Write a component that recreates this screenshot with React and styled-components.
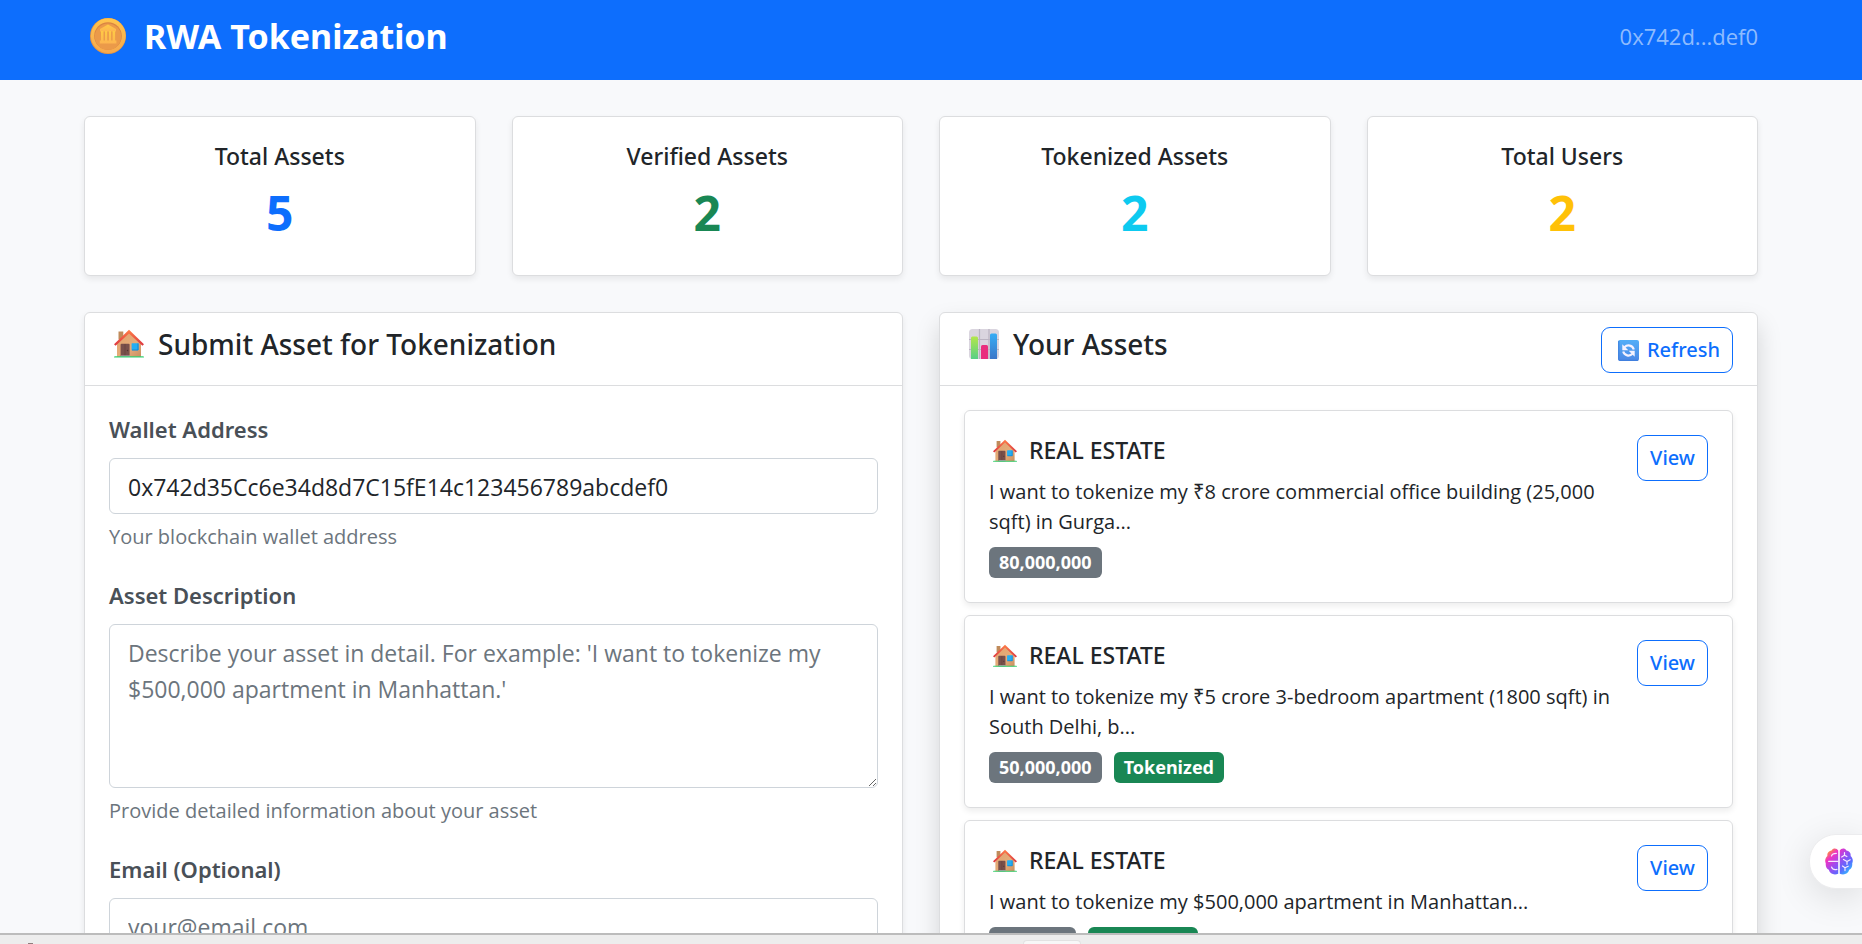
import React from 'react';
import styled, { createGlobalStyle, ThemeProvider } from 'styled-components';

const theme = {
  primary: '#0d6efd',
  success: '#198754',
  info: '#0dcaf0',
  warning: '#ffc107',
  secondary: '#6c757d',
  ink: '#212529',
  label: '#495057',
  line: '#dcdddf',
  body: '"Open Sans", "Noto Sans", sans-serif',
  display: '"Noto Sans", "Open Sans", sans-serif',
};

const GlobalStyle = createGlobalStyle`
  *, *::before, *::after { box-sizing: border-box; }
  body {
    margin: 0;
    background: #f8f9fb;
    color: ${theme.ink};
    font-family: ${theme.body};
  }
  h1, h2, h3, p { margin: 0; }
`;

const Shell = styled.div`
  display: flex;
  flex-direction: column;
  height: 100vh;
  overflow: hidden;
`;

const Header = styled.header`
  flex: none;
  background: ${({ theme }) => theme.primary};
  padding: 12px 20px 20px 0;
`;

const Container = styled.div`
  max-width: 1710px;
  margin: 0 auto;
  padding: 0 18px;
`;

const HeaderRow = styled(Container)`
  display: flex;
  align-items: center;
  justify-content: space-between;
`;

const Brand = styled.h1`
  display: flex;
  align-items: center;
  gap: 18px;
  padding-left: 6px;
  color: #fff;
  font: 700 34px/48px ${({ theme }) => theme.display};
`;

const WalletTag = styled.span`
  color: rgba(255, 255, 255, 0.55);
  font-size: 22px;
  line-height: 36px;
`;

const Content = styled.main`
  flex: 1;
  min-height: 0;
  overflow: hidden;
  padding: 36px 20px 0 0;
`;

const Card = styled.section`
  background: #fff;
  border: 1px solid ${({ theme }) => theme.line};
  border-radius: 6px;
  box-shadow: ${({ $raised }) =>
    $raised ? '0 12px 24px rgba(0, 0, 0, 0.15)' : '0 3px 6px rgba(0, 0, 0, 0.075)'};
`;

const Stats = styled.div`
  display: grid;
  grid-template-columns: repeat(4, 1fr);
  gap: 36px;
  margin-bottom: 36px;
`;

const StatCard = styled(Card)`
  padding: 24px 24px 32px;
  text-align: center;
`;

const StatTitle = styled.h2`
  margin-bottom: 11px;
  font: 500 23px/31px ${({ theme }) => theme.display};
`;

const StatValue = styled.p`
  color: ${({ theme, $tone }) => theme[$tone]};
  font: 700 48px/60px ${({ theme }) => theme.display};
`;

const Columns = styled.div`
  display: grid;
  grid-template-columns: repeat(2, 1fr);
  gap: 36px;
`;

const CardHeader = styled.header`
  display: flex;
  align-items: flex-start;
  justify-content: space-between;
  height: 73px;
  padding: 14px 24px 0;
  border-bottom: 1px solid ${({ theme }) => theme.line};
`;

const CardTitle = styled.h2`
  display: flex;
  align-items: center;
  gap: 14px;
  padding-left: 5px;
  font: 500 28px/34px ${({ theme }) => theme.display};
`;

const CardBody = styled.div`
  padding: 24px;
`;

const Field = styled.div`
  margin-bottom: 24px;
`;

const Label = styled.label`
  display: block;
  margin-bottom: 10px;
  color: ${({ theme }) => theme.label};
  font: 600 22px/38px ${({ theme }) => theme.display};
`;

const Input = styled.input`
  display: block;
  width: 100%;
  height: 56px;
  padding: 10px 18px 8px;
  border: 1px solid #ced4da;
  border-radius: 6px;
  background: #fff;
  color: ${({ theme }) => theme.ink};
  font: 400 23px/36px ${({ theme }) => theme.body};
  &::placeholder { color: ${({ theme }) => theme.secondary}; opacity: 1; }
`;

const TextArea = styled(Input).attrs({ as: 'textarea' })`
  height: 164px;
  resize: vertical;
`;

const Help = styled.p`
  margin-top: 7px;
  color: ${({ theme }) => theme.secondary};
  font-size: 20px;
  line-height: 31px;
`;

const OutlineButton = styled.button`
  display: inline-flex;
  flex: none;
  align-items: center;
  gap: 8px;
  height: 46px;
  padding: 0 12px;
  border: 1px solid ${({ theme }) => theme.primary};
  border-radius: 9px;
  background: #fff;
  color: ${({ theme }) => theme.primary};
  font: 500 20px/30px ${({ theme }) => theme.display};
  cursor: pointer;
  svg { margin-left: 4px; }
`;

const AssetList = styled.div`
  display: flex;
  flex-direction: column;
  gap: 12px;
`;

const AssetCard = styled(Card).attrs({ as: 'article' })`
  display: flex;
  align-items: flex-start;
  justify-content: space-between;
  gap: 12px;
  padding: 24px;
`;

const AssetName = styled.h3`
  display: flex;
  align-items: center;
  gap: 12px;
  margin-bottom: 11px;
  padding-left: 4px;
  font: 500 23px/31px ${({ theme }) => theme.display};
`;

const AssetText = styled.p`
  margin-bottom: 10px;
  font-size: 20px;
  line-height: 30px;
`;

const Badges = styled.div`
  display: flex;
  gap: 12px;
`;

const Badge = styled.span`
  padding: 0 10px;
  border-radius: 6px;
  background: ${({ theme, $tone }) => theme[$tone]};
  color: #fff;
  font: 700 18px/31px ${({ theme }) => theme.display};
`;

const AssistantButton = styled.button`
  position: fixed;
  right: 0;
  bottom: 55px;
  display: flex;
  align-items: center;
  width: 53px;
  height: 55px;
  padding: 0 0 0 15px;
  border: 1px solid #ececee;
  border-right: 0;
  border-radius: 27px 0 0 27px;
  background: #fff;
  box-shadow: 0 8px 36px rgba(0, 0, 0, 0.12);
  cursor: pointer;
`;

const BottomEdge = styled.footer`
  position: relative;
  display: flex;
  flex: none;
  align-items: flex-end;
  height: 11px;
  padding-left: 28px;
  border-top: 2px solid #bcbcbc;
  background: #ededed;
  overflow: hidden;
`;

const EdgeDot = styled.span`
  width: 5px;
  height: 1px;
  background: #8f7d7d;
`;

const EdgeTab = styled.span`
  width: 58px;
  height: 4px;
  margin-left: 54%;
  border: 1px solid #e2e2e2;
  border-bottom: 0;
  border-radius: 4px 4px 0 0;
  background: #f7f7f7;
`;

function CoinIcon() {
  return (
    <svg width="36" height="36" viewBox="0 0 36 36" aria-hidden="true">
      <defs>
        <linearGradient id="coinRim" x1="0" y1="0" x2="0" y2="1">
          <stop offset="0" stopColor="#ffc54d" />
          <stop offset="1" stopColor="#f6a94e" />
        </linearGradient>
        <linearGradient id="coinBank" x1="0" y1="0" x2="0" y2="1">
          <stop offset="0" stopColor="#ffca45" />
          <stop offset="1" stopColor="#fdb550" />
        </linearGradient>
      </defs>
      <circle cx="18" cy="18" r="18" fill="#e9963f" />
      <circle cx="18.3" cy="17.7" r="17.4" fill="url(#coinRim)" />
      <circle cx="18" cy="18" r="13.8" fill="#d98443" />
      <circle cx="18" cy="18.6" r="13.2" fill="#eb9a49" />
      <g fill="url(#coinBank)">
        <path d="M18 6.5 26 11v2.5H10V11z" />
        <path d="M11 13h2.5v10H11zM15 13h2.2v10H15zM18.9 13h2.2v10h-2.2zM22.6 13h2.5v10h-2.5zM9.8 22.5h16.6v3H9.8z" />
      </g>
    </svg>
  );
}

function HouseIcon({ size }) {
  return (
    <svg width={size} height={size} viewBox="0 0 30 30" aria-hidden="true">
      <defs>
        <linearGradient id="houseWall" x1="0" y1="0" x2="1" y2="1">
          <stop offset="0" stopColor="#e0a36c" />
          <stop offset="0.6" stopColor="#e6ac7a" />
          <stop offset="1" stopColor="#c98f60" />
        </linearGradient>
        <linearGradient id="houseRoof" x1="0" y1="0" x2="0" y2="1">
          <stop offset="0" stopColor="#ff8048" />
          <stop offset="1" stopColor="#dc3440" />
        </linearGradient>
      </defs>
      <path d="M4.5 2.5h4.8v8H4.5z" fill="#c08b5b" />
      <path d="M3 14 15 3l12 11v14H3z" fill="url(#houseWall)" />
      <path d="M0 15.2 15 .8l15 14.4-1.600 1.600L15 4.500 1.600 16.800z" fill="url(#houseRoof)" />
      <rect x="6.600" y="14.800" width="9" height="13" rx="1" fill="#79504b" />
      <path d="M11 15v12.500" stroke="#65413e" strokeWidth=".7" />
      <circle cx="13.500" cy="21.500" r=".7" fill="#50302f" />
      <rect x="17.600" y="14.200" width="7" height="7" rx=".5" fill="#25aef3" />
      <path d="M24 14.500v6.500h-6" fill="none" stroke="#1383cf" strokeWidth=".9" />
      <path d="M7 26.500h9v1.500H7z" fill="#bcaabd" />
      <path d="M1 27.300h28q1 0 1 1.200H0q0-1.200 1-1.200z" fill="#35cf70" />
    </svg>
  );
}

function ChartIcon() {
  return (
    <svg width="30" height="30" viewBox="0 0 30 30" aria-hidden="true">
      <defs>
        <linearGradient id="barGreen" x1="0" y1="0" x2="0" y2="1">
          <stop offset="0" stopColor="#b3e64b" />
          <stop offset="1" stopColor="#58cf87" />
        </linearGradient>
        <linearGradient id="barBlue" x1="0" y1="0" x2="0" y2="1">
          <stop offset="0" stopColor="#36adf5" />
          <stop offset="1" stopColor="#3c76c8" />
        </linearGradient>
      </defs>
      <rect width="30" height="30" rx="3.500" fill="#dad5df" />
      <path d="M10.500 0v30M20 0v30M0 10.500h30M0 20.500h30" stroke="#bbb4c2" strokeWidth="1.200" />
      <path d="M2 30V9q0-1.500 1.500-1.500h4Q9 7.500 9 9v21z" fill="url(#barGreen)" />
      <path d="M12 30V17.500q0-1.500 1.500-1.500h4q1.500 0 1.500 1.500V30z" fill="#e92e7e" />
      <path d="M21 30V6q0-1.500 1.500-1.500h4Q28 4.500 28 6v24z" fill="url(#barBlue)" />
    </svg>
  );
}

function RefreshIcon() {
  return (
    <svg width="21" height="21" viewBox="0 0 21 21" aria-hidden="true">
      <defs>
        <linearGradient id="refreshTile" x1="0" y1="0" x2="0" y2="1">
          <stop offset="0" stopColor="#52aef8" />
          <stop offset="1" stopColor="#4d88e5" />
        </linearGradient>
      </defs>
      <rect width="21" height="21" rx="2" fill="url(#refreshTile)" />
      <path d="M.8 1v18.500q0 .8.8.8H20" fill="none" stroke="#3e7edc" strokeWidth="1" />
      <g fill="none" stroke="#f5f2ff" strokeWidth="2.200">
        <path d="M15.800 9.500C14.500 5.200 9.500 4.200 6.500 7.200" />
        <path d="M5.200 11.500c1.300 4.300 6.300 5.300 9.300 2.300" />
      </g>
      <path d="M4.300 4.300v6h6zM16.700 16.700v-6h-6z" fill="#f5f2ff" />
    </svg>
  );
}

function BrainIcon() {
  return (
    <svg width="28" height="27" viewBox="0 0 28 27" aria-hidden="true">
      <defs>
        <linearGradient
          id="brainFill"
          gradientUnits="userSpaceOnUse"
          x1="3"
          y1="2"
          x2="25"
          y2="25"
        >
          <stop offset="0" stopColor="#ffa31f" />
          <stop offset="0.220" stopColor="#f032c4" />
          <stop offset="0.500" stopColor="#9a4df0" />
          <stop offset="0.750" stopColor="#5a6bff" />
          <stop offset="1" stopColor="#2fc4ff" />
        </linearGradient>
      </defs>
      <path
        fill="url(#brainFill)"
        d="M13.200 2.600C12 .2 8.200-.2 6.600 2.400 3.800 2.600 1.800 5 2.400 8 .2 9.800-.4 13 .800 15.400c-.4 3 .8 5.400 3 6.400 1 3.800 5 5.800 9.400 4zM14.800 2.600C16 .2 19.800-.2 21.400 2.400c2.800.2 4.800 2.600 4.200 5.600 2.200 1.800 2.800 5 1.600 7.400.4 3-.8 5.400-3 6.400-1 3.800-5 5.800-9.400 4z"
      />
      <g fill="none" stroke="#f8e9ff" strokeWidth="1.200" strokeLinecap="round" strokeLinejoin="round">
        <path d="M6.500 8c.5-1.800 2.500-2.600 4.800-2.600M3.600 13.300h9.400M6.500 19c.8 2.200 3 3 5.500 2.400" />
        <path d="M19.500 4.500v2.800m-2.800 1.700 2.800-1.700 2.400 1.200M18.500 11.500l3.500 2m0 2.800v-2.800l3.200-1.700M17.500 18l2.500 1.800v2.800m0-2.800 3.200-1.600" />
      </g>
    </svg>
  );
}

const stats = [
  { title: 'Total Assets', value: 5, tone: 'primary' },
  { title: 'Verified Assets', value: 2, tone: 'success' },
  { title: 'Tokenized Assets', value: 2, tone: 'info' },
  { title: 'Total Users', value: 2, tone: 'warning' },
];

const assets = [
  {
    text: 'I want to tokenize my ₹8 crore commercial office building (25,000 sqft) in Gurga...',
    value: '80,000,000',
  },
  {
    text: 'I want to tokenize my ₹5 crore 3-bedroom apartment (1800 sqft) in South Delhi, b...',
    value: '50,000,000',
    tokenized: true,
  },
  {
    text: 'I want to tokenize my $500,000 apartment in Manhattan...',
    value: '500,000',
    tokenized: true,
  },
];

export default function App() {
  return (
    <ThemeProvider theme={theme}>
      <GlobalStyle />
      <Shell>
        <Header>
          <HeaderRow>
            <Brand>
              <CoinIcon />
              RWA Tokenization
            </Brand>
            <WalletTag>0x742d...def0</WalletTag>
          </HeaderRow>
        </Header>

        <Content>
          <Container>
            <Stats>
              {stats.map((s) => (
                <StatCard key={s.title}>
                  <StatTitle>{s.title}</StatTitle>
                  <StatValue $tone={s.tone}>{s.value}</StatValue>
                </StatCard>
              ))}
            </Stats>

            <Columns>
              <Card>
                <CardHeader>
                  <CardTitle>
                    <HouseIcon size={30} />
                    Submit Asset for Tokenization
                  </CardTitle>
                </CardHeader>
                <CardBody as="form">
                  <Field>
                    <Label htmlFor="wallet">Wallet Address</Label>
                    <Input
                      id="wallet"
                      type="text"
                      defaultValue="0x742d35Cc6e34d8d7C15fE14c123456789abcdef0"
                    />
                    <Help>Your blockchain wallet address</Help>
                  </Field>
                  <Field>
                    <Label htmlFor="description">Asset Description</Label>
                    <TextArea
                      id="description"
                      placeholder="Describe your asset in detail. For example: 'I want to tokenize my $500,000 apartment in Manhattan.'"
                    />
                    <Help>Provide detailed information about your asset</Help>
                  </Field>
                  <Field>
                    <Label htmlFor="email">Email (Optional)</Label>
                    <Input id="email" type="email" placeholder="your@email.com" />
                  </Field>
                </CardBody>
              </Card>

              <Card $raised>
                <CardHeader>
                  <CardTitle>
                    <ChartIcon />
                    Your Assets
                  </CardTitle>
                  <OutlineButton type="button">
                    <RefreshIcon />
                    Refresh
                  </OutlineButton>
                </CardHeader>
                <CardBody>
                  <AssetList>
                    {assets.map((a) => (
                      <AssetCard key={a.value}>
                        <div>
                          <AssetName>
                            <HouseIcon size={24} />
                            REAL ESTATE
                          </AssetName>
                          <AssetText>{a.text}</AssetText>
                          <Badges>
                            <Badge $tone="secondary">{a.value}</Badge>
                            {a.tokenized && <Badge $tone="success">Tokenized</Badge>}
                          </Badges>
                        </div>
                        <OutlineButton type="button">View</OutlineButton>
                      </AssetCard>
                    ))}
                  </AssetList>
                </CardBody>
              </Card>
            </Columns>
          </Container>
        </Content>

        <AssistantButton type="button" aria-label="Assistant">
          <BrainIcon />
        </AssistantButton>

        <BottomEdge>
          <EdgeDot />
          <EdgeTab />
        </BottomEdge>
      </Shell>
    </ThemeProvider>
  );
}
